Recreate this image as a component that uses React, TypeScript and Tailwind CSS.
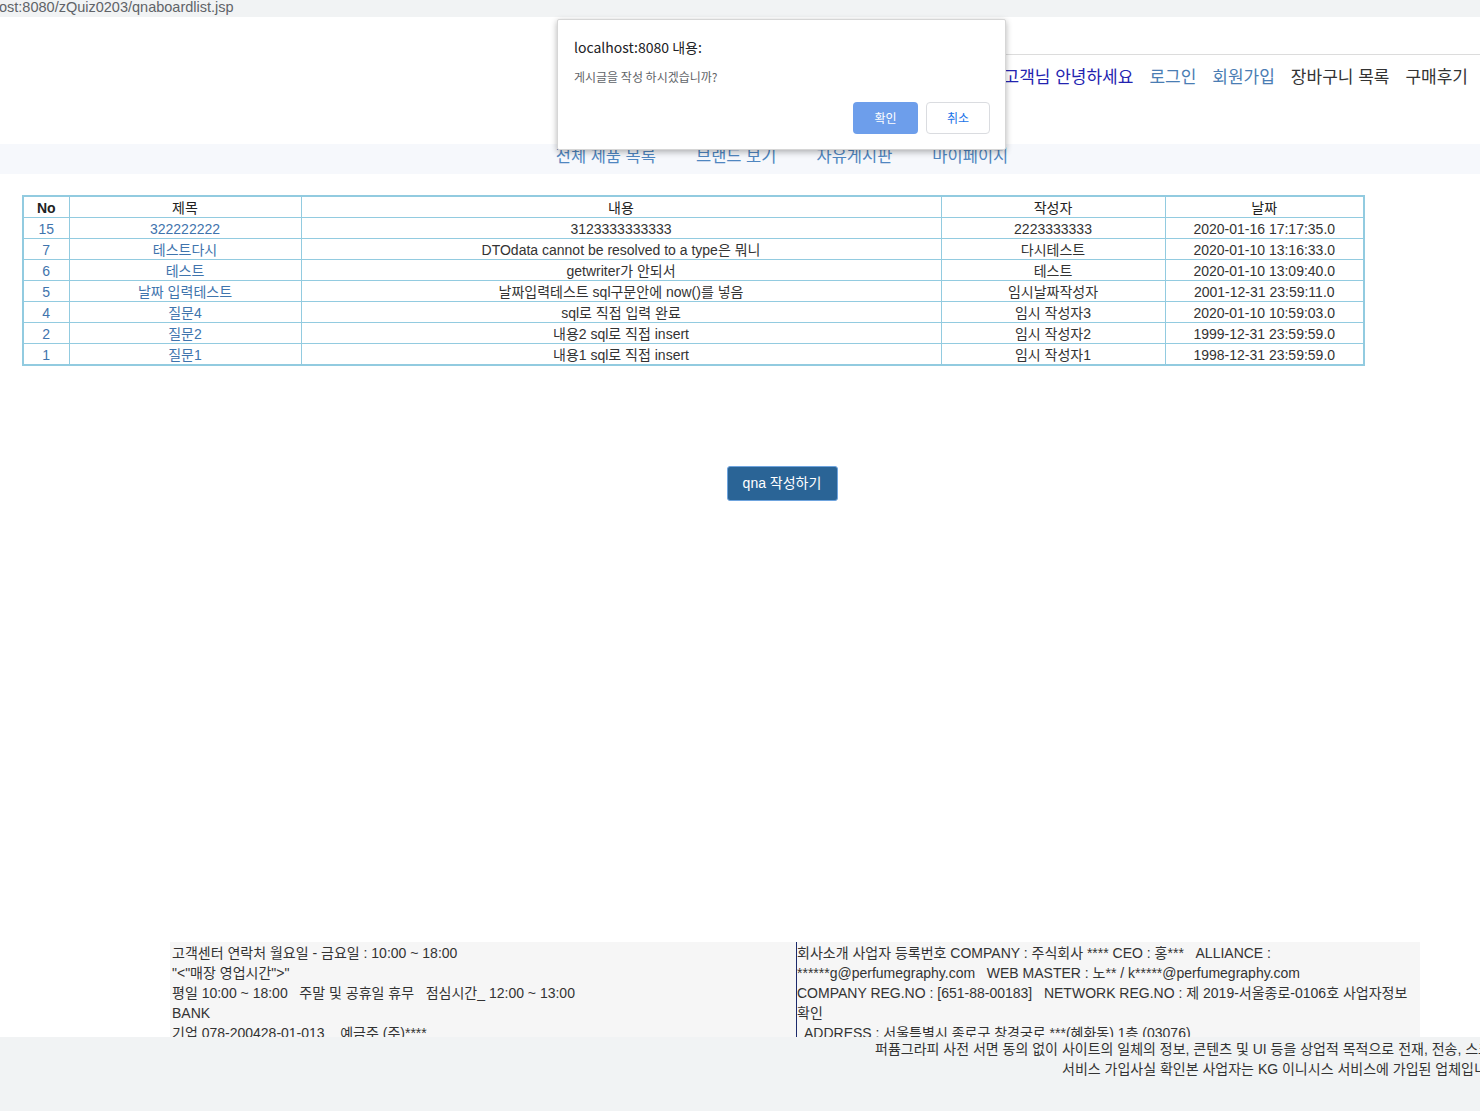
const rows = [
  { no: '15', title: '322222222', body: '3123333333333', writer: '2223333333', date: '2020-01-16 17:17:35.0' },
  { no: '7', title: '테스트다시', body: 'DTOdata cannot be resolved to a type은 뭐니', writer: '다시테스트', date: '2020-01-10 13:16:33.0' },
  { no: '6', title: '테스트', body: 'getwriter가 안되서', writer: '테스트', date: '2020-01-10 13:09:40.0' },
  { no: '5', title: '날짜 입력테스트', body: '날짜입력테스트 sql구문안에 now()를 넣음', writer: '임시날짜작성자', date: '2001-12-31 23:59:11.0' },
  { no: '4', title: '질문4', body: 'sql로 직접 입력 완료', writer: '임시 작성자3', date: '2020-01-10 10:59:03.0' },
  { no: '2', title: '질문2', body: '내용2 sql로 직접 insert', writer: '임시 작성자2', date: '1999-12-31 23:59:59.0' },
  { no: '1', title: '질문1', body: '내용1 sql로 직접 insert', writer: '임시 작성자1', date: '1998-12-31 23:59:59.0' },
];

const font = "font-['Liberation_Sans','Noto_Sans_CJK_KR',sans-serif]";
const td = 'border border-[#92cbe0] h-[21px] px-0 pb-0 pt-[3px] text-center leading-[17px]';

export default function App() {
  return (
    <div className={`relative w-[1480px] h-[1112px] overflow-hidden bg-white text-[#333] ${font}`}>
      {/* address strip */}
      <div className="h-[17px] bg-[#f1f3f4] text-[14.5px] leading-[14px] text-[#5f6368] whitespace-nowrap -ml-[1px]">
        ost:8080/zQuiz0203/qnaboardlist.jsp
      </div>

      {/* header */}
      <div className="h-[38px] ml-[620px] border-b border-[#dcdcdc]" />
      <div className="h-[89px] flex justify-end items-start pt-[12px] pr-[12px] gap-[16px] text-[17px] leading-[22px] whitespace-nowrap">
        <span className="text-[#2323b0]">고객님 안녕하세요</span>
        <span className="text-[#4a7db3]">로그인</span>
        <span className="text-[#4a7db3]">회원가입</span>
        <span className="text-[#333]">장바구니 목록</span>
        <span className="text-[#333]">구매후기</span>
      </div>

      {/* nav */}
      <div className="h-[30px] bg-[#f6f8fc] flex justify-center pl-[84px] gap-[40px] text-[16.5px] leading-[24px] text-[#4f86c0] whitespace-nowrap">
        <span>전체 제품 목록</span>
        <span>브랜드 보기</span>
        <span>자유게시판</span>
        <span>마이페이지</span>
      </div>

      {/* board table */}
      <div className="pt-[21px] pl-[22px]">
        <table className="border-collapse border-2 border-[#92cbe0] text-[14px] w-[1343px]">
          <thead>
            <tr className="text-[#222]">
              <td className={`${td} w-[46px] font-bold`}>No</td>
              <td className={`${td} w-[232px]`}>제목</td>
              <td className={`${td} w-[640px]`}>내용</td>
              <td className={`${td} w-[224px]`}>작성자</td>
              <td className={td}>날짜</td>
            </tr>
          </thead>
          <tbody>
            {rows.map((r) => (
              <tr key={r.no}>
                <td className={`${td} text-[#3f74ad]`}>{r.no}</td>
                <td className={`${td} text-[#3f74ad]`}>{r.title}</td>
                <td className={td}>{r.body}</td>
                <td className={td}>{r.writer}</td>
                <td className={td}>{r.date}</td>
              </tr>
            ))}
          </tbody>
        </table>
      </div>

      {/* write button */}
      <div className="flex justify-center pl-[84px] pt-[100px]">
        <button className="w-[111px] h-[35px] rounded-[3px] bg-[#2a6496] border border-[#6fa4de] text-white text-[14px]">
          qna 작성하기
        </button>
      </div>

      {/* footer */}
      <div className="flex pl-[170px] pt-[441px] h-[536px] text-[14px] leading-[20px] text-[#333] whitespace-nowrap">
        <div className="w-[626px] h-[95px] overflow-hidden bg-[#f6f6f6] pl-[2px] pt-[1px]">
          <div>고객센터 연락처 월요일 - 금요일 : 10:00 ~ 18:00</div>
          <div>"&lt;"매장 영업시간"&gt;"</div>
          <div>평일 10:00 ~ 18:00&nbsp;&nbsp; 주말 및 공휴일 휴무&nbsp;&nbsp; 점심시간_ 12:00 ~ 13:00</div>
          <div>BANK</div>
          <div>기업 078-200428-01-013&nbsp;&nbsp;&nbsp; 예금주 (주)****</div>
        </div>
        <div className="w-[624px] h-[95px] overflow-hidden bg-[#f6f6f6] border-l border-[#1c2a6b] pt-[1px]">
          <div>회사소개 사업자 등록번호 COMPANY : 주식회사 **** CEO : 홍***&nbsp;&nbsp; ALLIANCE :</div>
          <div>******g@perfumegraphy.com&nbsp;&nbsp; WEB MASTER : 노** / k*****@perfumegraphy.com</div>
          <div>COMPANY REG.NO : [651-88-00183]&nbsp;&nbsp; NETWORK REG.NO : 제 2019-서울종로-0106호 사업자정보</div>
          <div>확인</div>
          <div>&nbsp; ADDRESS : 서울특별시 종로구 창경궁로 ***(혜화동) 1층 (03076)</div>
        </div>
      </div>
      <div className="h-[74px] bg-[#f1f3f4] pt-[2px] text-[14px] leading-[20px] text-[#333] whitespace-nowrap overflow-hidden">
        <div className="pl-[875px]">퍼퓸그라피 사전 서면 동의 없이 사이트의 일체의 정보, 콘텐츠 및 UI 등을 상업적 목적으로 전재, 전송, 스크래핑 등 무단 사용할 수 없습니다.</div>
        <div className="pl-[1062px]">서비스 가입사실 확인본 사업자는 KG 이니시스 서비스에 가입된 업체입니다.</div>
      </div>

      {/* confirm dialog */}
      <div className="absolute left-[557px] top-[19px] w-[449px] h-[131px] bg-white rounded-[2px] border border-[#d6d6d6] shadow-[0_2px_6px_rgba(0,0,0,0.3)] font-['Noto_Sans_CJK_KR','Liberation_Sans',sans-serif]">
        <div className="pl-[16px] pt-[17px] text-[14px] leading-[20px] text-[#202124]">localhost:8080 내용:</div>
        <div className="pl-[16px] pt-[12px] text-[12px] leading-[16px] text-[#5f6368]">게시글을 작성 하시겠습니까?</div>
        <div className="flex justify-end gap-[8px] pr-[15px] pt-[17px]">
          <button className="w-[65px] h-[32px] rounded-[4px] bg-[#6d9eeb] text-white text-[12px]">확인</button>
          <button className="w-[64px] h-[32px] rounded-[4px] bg-white border border-[#dadce0] text-[#1a73e8] text-[12px]">취소</button>
        </div>
      </div>
    </div>
  );
}
